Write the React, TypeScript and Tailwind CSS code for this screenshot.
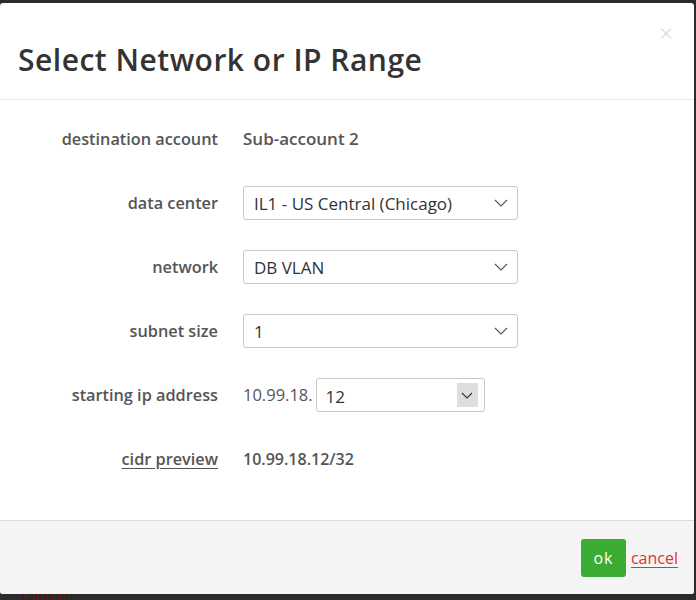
import React from "react";

function Chevron() {
  return (
    <svg width="14" height="8" viewBox="0 0 14 8" fill="none">
      <path d="M1 1 L7 7 L13 1" stroke="#555" strokeWidth="1.1" />
    </svg>
  );
}

function Select({ value, width }: { value: string; width: string }) {
  return (
    <div
      className={`flex h-[34px] items-center justify-between rounded-[3px] border border-[#c8c8c8] bg-white pl-[10px] pr-[9px] text-[17px] text-[#333] ${width}`}
    >
      <span className="pt-[1px]">{value}</span>
      <Chevron />
    </div>
  );
}

function Row({ label, children, underline }: { label: string; children: React.ReactNode; underline?: boolean }) {
  return (
    <div className="flex h-[34px] items-center">
      <div
        className={`w-[218px] shrink-0 pt-[1px] text-right text-[16.3px] font-semibold text-[#555] ${underline ? "underline underline-offset-[3px]" : ""}`}
      >
        {label}
      </div>
      <div className="ml-[25px] flex items-center">{children}</div>
    </div>
  );
}

export default function App() {
  return (
    <div
      className="relative h-[600px] w-[696px] overflow-hidden bg-[#2b2b2b]"
      style={{ fontFamily: '"Open Sans", "Noto Sans", sans-serif' }}
    >
      <div className="absolute left-[22px] top-[583px] text-[16px] text-[#5a1010]">cancel</div>
      <div className="absolute left-0 top-[3px] flex h-[591px] w-[694px] flex-col overflow-hidden rounded-[3px] bg-white">
        <div className="relative flex h-[97px] items-center border-b border-[#e5e5e5] pl-[18px] pt-[17px]">
          <h1 className="text-[30px] font-semibold tracking-[0.5px] text-[#333]">Select Network or IP Range</h1>
          <span className="absolute right-[21px] top-[18px] text-[24px] font-light leading-none text-[#d6d6d6]">×</span>
        </div>
        <div className="flex flex-1 flex-col gap-[30px] pt-[22px]">
          <Row label="destination account">
            <span className="text-[17px] font-semibold text-[#555]">Sub-account 2</span>
          </Row>
          <Row label="data center">
            <Select value="IL1 - US Central (Chicago)" width="w-[275px]" />
          </Row>
          <Row label="network">
            <Select value="DB VLAN" width="w-[275px]" />
          </Row>
          <Row label="subnet size">
            <Select value="1" width="w-[275px]" />
          </Row>
          <Row label="starting ip address">
            <span className="text-[16.5px] text-[#555]">10.99.18.</span>
            <div className="ml-[3px] flex h-[34px] w-[169px] items-center justify-between rounded-[3px] border border-[#c8c8c8] bg-white pl-[9px] pr-[6px] text-[17px] text-[#333]">
              <span className="pt-[3px]">12</span>
              <div className="flex h-[24px] w-[21px] items-center justify-center bg-[#dedede]">
                <svg width="12" height="7" viewBox="0 0 12 7" fill="none">
                  <path d="M1 1 L6 6 L11 1" stroke="#333" strokeWidth="1.1" />
                </svg>
              </div>
            </div>
          </Row>
          <Row label="cidr preview" underline>
            <span className="text-[16px] font-semibold text-[#555]">10.99.18.12/32</span>
          </Row>
        </div>
        <div className="flex h-[74px] items-center justify-end border-t border-[#dcdcdc] bg-[#f4f4f4] pr-[16px]">
          <button className="flex h-[38px] w-[45px] items-center justify-center rounded-[3px] bg-[#3cab32] text-[16px] tracking-[1px] text-white">
            ok
          </button>
          <a className="ml-[5px] text-[16px] text-[#e5342b] underline underline-offset-[3px]">cancel</a>
        </div>
      </div>
    </div>
  );
}
